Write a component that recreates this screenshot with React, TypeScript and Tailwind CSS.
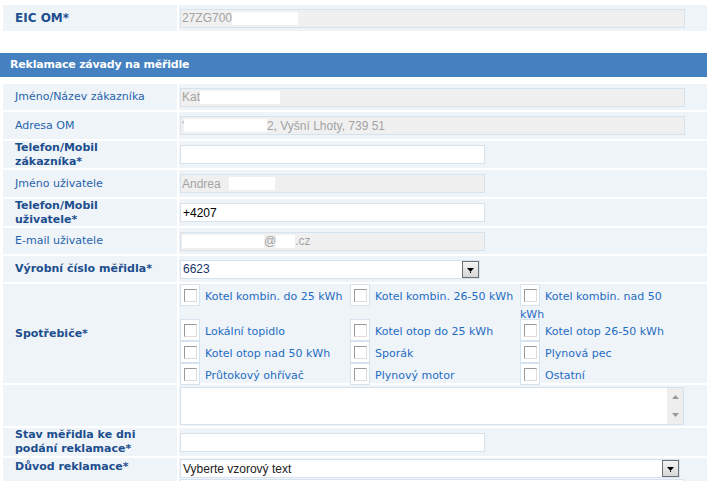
import React from "react";

const lbl = "font-['DejaVu_Sans',sans-serif] text-[11px]";

function Row({ h, label, bold, children, top }: { h: string; label: React.ReactNode; bold?: boolean; children?: React.ReactNode; top?: boolean }) {
  return (
    <div className={`flex gap-[2px] ${h}`}>
      <div
        className={`flex w-[174px] shrink-0 bg-[#eff4f9] pl-[12px] leading-[14px] ${top ? "items-start pt-[3px]" : "items-center"} ${lbl} ${
          bold ? "font-bold text-[#1d4e8d]" : "text-[#2763ab]"
        }`}
      >
        <div>{label}</div>
      </div>
      <div className="flex flex-1 flex-col justify-center bg-[#eff4f9] pl-[1px]">{children}</div>
    </div>
  );
}

function Disabled({ w, children }: { w: string; children?: React.ReactNode }) {
  return (
    <div className={`flex h-[19px] ${w} items-center border border-[#d6e3ef] bg-[#f0f0f0] pl-[1px] font-['Liberation_Sans',sans-serif] text-[12px] whitespace-nowrap text-[#a3a3a3]`}>
      {children}
    </div>
  );
}

function TextBox({ w, children }: { w: string; children?: React.ReactNode }) {
  return (
    <div className={`flex h-[19px] ${w} items-center border border-[#d6e3ef] bg-white pl-[2px] font-['Liberation_Sans',sans-serif] text-[12px] text-black`}>
      {children}
    </div>
  );
}

function Mask({ w }: { w: string }) {
  return <span className={`inline-block h-[13px] ${w} bg-white`} />;
}

function Select({ w, children, color }: { w: string; children: React.ReactNode; color: string }) {
  return (
    <div className={`flex h-[19px] ${w} items-center justify-between border border-[#d6e3ef] bg-white pl-[2px] font-['Liberation_Sans',sans-serif] text-[12px] ${color}`}>
      <span>{children}</span>
      <span className="flex h-[17px] w-[17px] items-center justify-center border border-[#707070] bg-gradient-to-b from-[#f4f4f4] to-[#d6d6d6]">
        <svg width="7" height="5" viewBox="0 0 7 5" className="mt-[2px]">
          <path d="M0 0H7L3.5 4Z" fill="#000" />
          <rect x="3" y="4" width="1" height="1" fill="#000" />
        </svg>
      </span>
    </div>
  );
}

function Box() {
  return (
    <span className="flex h-[22px] w-[20px] shrink-0 items-center justify-center border border-[#d6e3ef] bg-white">
      <span className="h-[13px] w-[13px] border border-t-[#9a9a9a] border-l-[#9a9a9a] border-r-[#dcdcdc] border-b-[#dcdcdc] bg-white" />
    </span>
  );
}

function Check({ text }: { text: string }) {
  return (
    <div className="flex w-[170px] items-center">
      <Box />
      <span className="ml-[5px] pt-[4px] whitespace-nowrap">{text}</span>
    </div>
  );
}

const rows = [
  ["Lokální topidlo", "Kotel otop do 25 kWh", "Kotel otop 26-50 kWh"],
  ["Kotel otop nad 50 kWh", "Sporák", "Plynová pec"],
  ["Průtokový ohřívač", "Plynový motor", "Ostatní"],
];

export default function App() {
  return (
    <div className="h-[481px] w-[707px] overflow-hidden bg-white">
      <div className="pt-[5px] pl-[3px]">
        <div className="flex h-[26px] gap-[2px]">
          <div className="flex w-[174px] shrink-0 items-center bg-[#eff4f9] pl-[12px] font-['DejaVu_Sans',sans-serif] text-[12px] font-bold text-[#1d4e8d]">
            EIC OM*
          </div>
          <div className="flex flex-1 items-center bg-[#eff4f9] pl-[1px]">
            <Disabled w="w-[505px]">
              27ZG700
              <Mask w="w-[66px]" />
            </Disabled>
          </div>
        </div>
      </div>

      <div className="mt-[22px] flex h-[24px] items-center bg-[#4580c0] pl-[10px] font-['DejaVu_Sans',sans-serif] text-[11px] font-bold tracking-[-0.2px] text-white">
        Reklamace závady na měřidle
      </div>

      <div className="mt-[7px] flex flex-col gap-[2px] pl-[3px]">
        <Row h="h-[26px]" label="Jméno/Název zákazníka">
          <Disabled w="w-[505px]">
            Kat
            <Mask w="w-[80px]" />
          </Disabled>
        </Row>
        <Row h="h-[27px]" label="Adresa OM">
          <Disabled w="w-[505px]">
            <span className="text-[10px]">'</span>
            <Mask w="w-[83px]" />
            2, Vyšní Lhoty, 739 51
          </Disabled>
        </Row>
        <Row h="h-[27px]" bold label={<>Telefon/Mobil<br />zákazníka*</>}>
          <TextBox w="w-[305px]" />
        </Row>
        <Row h="h-[27px]" label="Jméno uživatele">
          <Disabled w="w-[305px]">
            Andrea
            <span className="ml-[8px]" />
            <Mask w="w-[46px]" />
          </Disabled>
        </Row>
        <Row h="h-[27px]" bold label={<>Telefon/Mobil<br />uživatele*</>}>
          <TextBox w="w-[305px]">+4207</TextBox>
        </Row>
        <Row h="h-[26px]" label="E-mail uživatele">
          <Disabled w="w-[305px]">
            <Mask w="w-[82px]" />
            @
            <Mask w="w-[19px]" />
            .cz
          </Disabled>
        </Row>
        <Row h="h-[26px]" bold label="Výrobní číslo měřidla*">
          <Select w="w-[300px]" color="text-[#1c3668]">6623</Select>
        </Row>
        <Row h="h-[99px]" bold label="Spotřebiče*">
          <div className="flex h-full flex-col justify-start font-['DejaVu_Sans',sans-serif] text-[11px] leading-[16px] text-[#1f6cc2]">
            <div className="flex h-[35px] items-start">
              <Check text="Kotel kombin. do 25 kWh" />
              <Check text="Kotel kombin. 26-50 kWh" />
              <div className="w-[170px]">
                <div className="flex items-center">
                  <Box />
                  <span className="ml-[5px] pt-[4px] whitespace-nowrap">Kotel kombin. nad 50</span>
                </div>
                <div className="mt-[1px]">kWh</div>
              </div>
            </div>
            {rows.map((r) => (
              <div key={r[0]} className="flex h-[22px]">
                {r.map((t) => (
                  <Check key={t} text={t} />
                ))}
              </div>
            ))}
          </div>
        </Row>
        <Row h="h-[41px]" label="">
          <div className="flex h-[38px] w-[504px] border border-[#d6e3ef] bg-white">
            <div className="flex-1" />
            <div className="flex w-[16px] flex-col items-center justify-between bg-[#eeeeee] py-[7px]">
              <svg width="7" height="4" viewBox="0 0 7 4"><path d="M3.5 0L7 4H0Z" fill="#9a9a9a" /></svg>
              <svg width="7" height="4" viewBox="0 0 7 4"><path d="M0 0H7L3.5 4Z" fill="#9a9a9a" /></svg>
            </div>
          </div>
        </Row>
        <Row h="h-[28px]" bold label={<>Stav měřidla ke dni<br />podání reklamace*</>}>
          <TextBox w="w-[305px]" />
        </Row>
        <div className="flex h-[80px] gap-[2px]">
          <div className={`w-[174px] shrink-0 bg-[#eff4f9] pt-[2px] pl-[12px] leading-[14px] ${lbl} font-bold text-[#1d4e8d]`}>
            Důvod reklamace*
          </div>
          <div className="flex flex-1 flex-col gap-[1px] bg-[#eff4f9] pt-[1px] pl-[1px]">
            <Select w="w-[500px]" color="text-[#222]">Vyberte vzorový text</Select>
            <div className="h-[40px] w-[504px] border border-[#d6e3ef] bg-white" />
          </div>
        </div>
      </div>
    </div>
  );
}
